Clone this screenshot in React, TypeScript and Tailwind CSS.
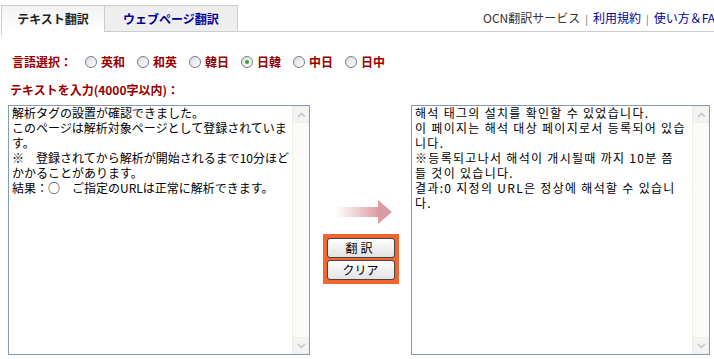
import React from 'react';

const jaLines = [
  '解析タグの設置が確認できました。',
  'このページは解析対象ページとして登録されていま',
  'す。',
  '※　登録されてから解析が開始されるまで10分ほど',
  'かかることがあります。',
  '結果：○　ご指定のURLは正常に解析できます。',
];

const koLines = [
  '해석 태그의 설치를 확인할 수 있었습니다.',
  '이 페이지는 해석 대상 페이지로서 등록되어 있습',
  '니다.',
  '※등록되고나서 해석이 개시될때 까지 10분 쯤',
  '들 것이 있습니다.',
  '결과:0 지정의 URL은 정상에 해석할 수 있습니',
  '다.',
];

const languages = [
  { label: '英和', checked: false },
  { label: '和英', checked: false },
  { label: '韓日', checked: false },
  { label: '日韓', checked: true },
  { label: '中日', checked: false },
  { label: '日中', checked: false },
];

const Radio = ({ checked }: { checked: boolean }) => (
  <span className="w-[12px] h-[12px] rounded-full border border-[#6f7f8f] bg-gradient-to-br from-[#dcdcdc] to-white flex items-center justify-center shrink-0">
    {checked && <span className="w-[4px] h-[4px] rounded-full bg-[#3ca23c]" />}
  </span>
);

const ScrollBar = () => (
  <div className="w-[17px] border-l border-[#ededeb] bg-[#fbfbf8] flex flex-col justify-between">
    <div className="h-[17px] border border-[#eeeeea] bg-[#f3f3ef] flex items-center justify-center">
      <svg width="9" height="6" viewBox="0 0 9 6">
        <path d="M1 5 L4.5 1.5 L8 5" fill="none" stroke="#c4c8cc" strokeWidth="1.6" />
      </svg>
    </div>
    <div className="h-[17px] border border-[#eeeeea] bg-[#f3f3ef] flex items-center justify-center">
      <svg width="9" height="6" viewBox="0 0 9 6">
        <path d="M1 1 L4.5 4.5 L8 1" fill="none" stroke="#c4c8cc" strokeWidth="1.6" />
      </svg>
    </div>
  </div>
);

const TextBox = ({ lines, width, ko }: { lines: string[]; width: string; ko?: boolean }) => (
  <div className={`${width} h-[250px] border border-[#7f9db9] bg-white flex`}>
    <div
      className={`flex-1 pl-[3px] -mt-[1px] text-[12px] leading-[15px] text-black whitespace-nowrap overflow-hidden ${
        ko ? "font-['Noto_Sans_CJK_KR',sans-serif] tracking-[1.3px]" : "font-['Noto_Sans_CJK_JP',sans-serif]"
      }`}
    >
      {lines.map((line, i) => (
        <div key={i}>{line}</div>
      ))}
    </div>
    <ScrollBar />
  </div>
);

export default function App() {
  return (
    <div className="w-[714px] h-[359px] bg-white overflow-hidden font-['Noto_Sans_CJK_JP',sans-serif]">
      {/* Tabs */}
      <div className="flex items-end h-[32px] pt-[5px] pl-[1px]">
        <div className="w-[103px] h-[27px] border-l border-t border-[#cccccc] bg-gradient-to-b from-[#f2f2f2] to-white flex items-center justify-center text-[12px] font-bold text-[#222]">
          テキスト翻訳
        </div>
        <div className="w-[134px] h-[27px] border border-[#cccccc] bg-[#eeeeee] flex items-center justify-center text-[12px] font-bold text-[#000099]">
          ウェブページ翻訳
        </div>
        <div className="flex-1 h-[27px] border-b border-[#cccccc] flex items-center pl-[245px] whitespace-nowrap overflow-hidden text-[12px]">
          <span className="text-[#333]">OCN翻訳サービス</span>
          <span className="text-[#666] mx-[5px] text-[10px]">|</span>
          <span className="text-[#000099]">利用規約</span>
          <span className="text-[#666] mx-[5px] text-[10px]">|</span>
          <span className="text-[#000099]">使い方＆FAQ</span>
        </div>
      </div>
      <div className="ml-[1px] w-px h-[8px] bg-gradient-to-b from-[#cccccc] to-white" />

      {/* Language select */}
      <div className="flex items-center h-[16px] mt-[14px] pl-[12px] text-[12px] font-bold text-[#990000]">
        <span className="mr-[13px]">言語選択：</span>
        {languages.map((lang) => (
          <div key={lang.label} className="flex items-center mr-[12px]">
            <Radio checked={lang.checked} />
            <span className="ml-[4px]">{lang.label}</span>
          </div>
        ))}
      </div>

      <div className="h-[16px] mt-[12px] pl-[10px] flex items-center text-[12px] font-bold text-[#990000]">
        テキストを入力(4000字以内)：
      </div>

      {/* Main area */}
      <div className="flex mt-[7px] pl-[8px]">
        <TextBox lines={jaLines} width="w-[302px]" />
        <div className="w-[101px] flex flex-col items-center pt-[95px]">
          <svg width="56" height="24" viewBox="0 0 56 24" className="ml-[6px]">
            <defs>
              <linearGradient id="arrowFade" x1="0" y1="0" x2="1" y2="0">
                <stop offset="0" stopColor="#ffffff" />
                <stop offset="1" stopColor="#d99aa2" />
              </linearGradient>
            </defs>
            <rect x="0" y="7" width="44" height="10" fill="url(#arrowFade)" />
            <path d="M42 0 L56 12 L42 24 Z" fill="#d99aa2" />
          </svg>
          <div className="mt-[10px] w-[76px] bg-[#f2652f] p-[4px] flex flex-col gap-[2px]">
            <button className="h-[20px] rounded-[3px] border border-[#444] bg-gradient-to-b from-white to-[#e2e2e2] text-[12px] leading-none text-black tracking-[3px]">
              翻訳
            </button>
            <button className="h-[20px] rounded-[3px] border border-[#444] bg-gradient-to-b from-white to-[#e2e2e2] text-[12px] leading-none text-black">
              クリア
            </button>
          </div>
        </div>
        <TextBox lines={koLines} width="w-[299px]" ko />
      </div>
    </div>
  );
}
